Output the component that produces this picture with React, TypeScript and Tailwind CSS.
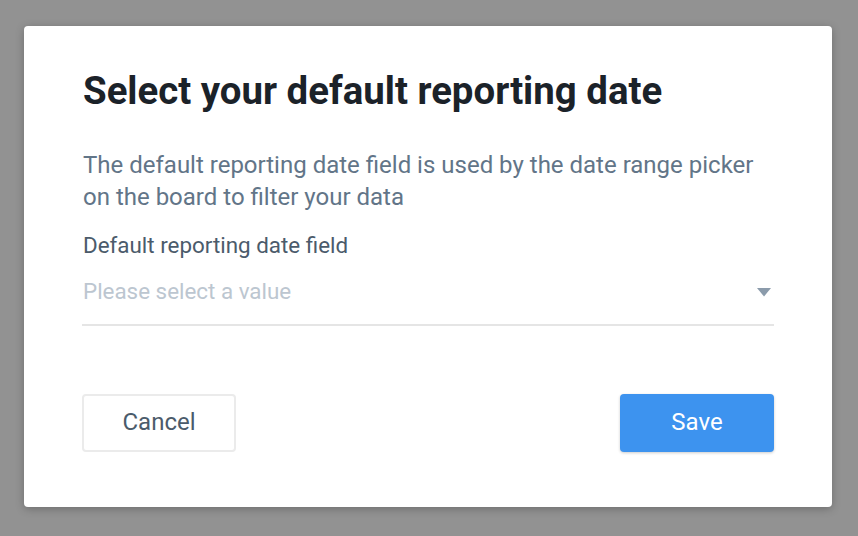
export default function App() {
  return (
    <div
      className="w-full h-[536px] bg-[#929292] pt-[26px] pl-[24px]"
      style={{ fontFamily: 'Roboto, "Noto Sans", sans-serif' }}
    >
      <div className="w-[808px] h-[481px] bg-white rounded-[4px] shadow-[0_2px_8px_rgba(0,0,0,0.25)] px-[58px] pt-[41px] flex flex-col">
        <h1 className="text-[38.4px] leading-[48px] font-bold text-[#1b2229] pl-px">
          Select your default reporting date
        </h1>
        <p className="mt-[34px] text-[24px] leading-[32px] text-[#627588] pl-px">
          The default reporting date field is used by the date range picker on the board to filter your data
        </p>
        <label className="mt-[20px] text-[22.4px] leading-[24px] text-[#4b5b6b] pl-px">
          Default reporting date field
        </label>
        <button className="mt-[22px] pb-[21px] flex items-start justify-between border-b-2 border-[#e5e5e5] text-left">
          <span className="text-[22.4px] leading-[24px] text-[#bcc6d0] pl-px">Please select a value</span>
          <svg width="14" height="9" viewBox="0 0 14 9" className="mt-[9px] mr-[3px]">
            <path d="M0 0 L14 0 L7 8.5 Z" fill="#8b9bab" />
          </svg>
        </button>
        <div className="mt-[68px] flex justify-between">
          <button className="w-[154px] h-[58px] pb-[2px] rounded-[4px] border-2 border-[#ebebeb] bg-white text-[24px] text-[#4b5b6b]">
            Cancel
          </button>
          <button className="w-[154px] h-[58px] pb-[2px] rounded-[4px] bg-[#3d93ef] shadow-[0_1px_3px_rgba(0,0,0,0.2)] text-[24px] text-white">
            Save
          </button>
        </div>
      </div>
    </div>
  );
}
